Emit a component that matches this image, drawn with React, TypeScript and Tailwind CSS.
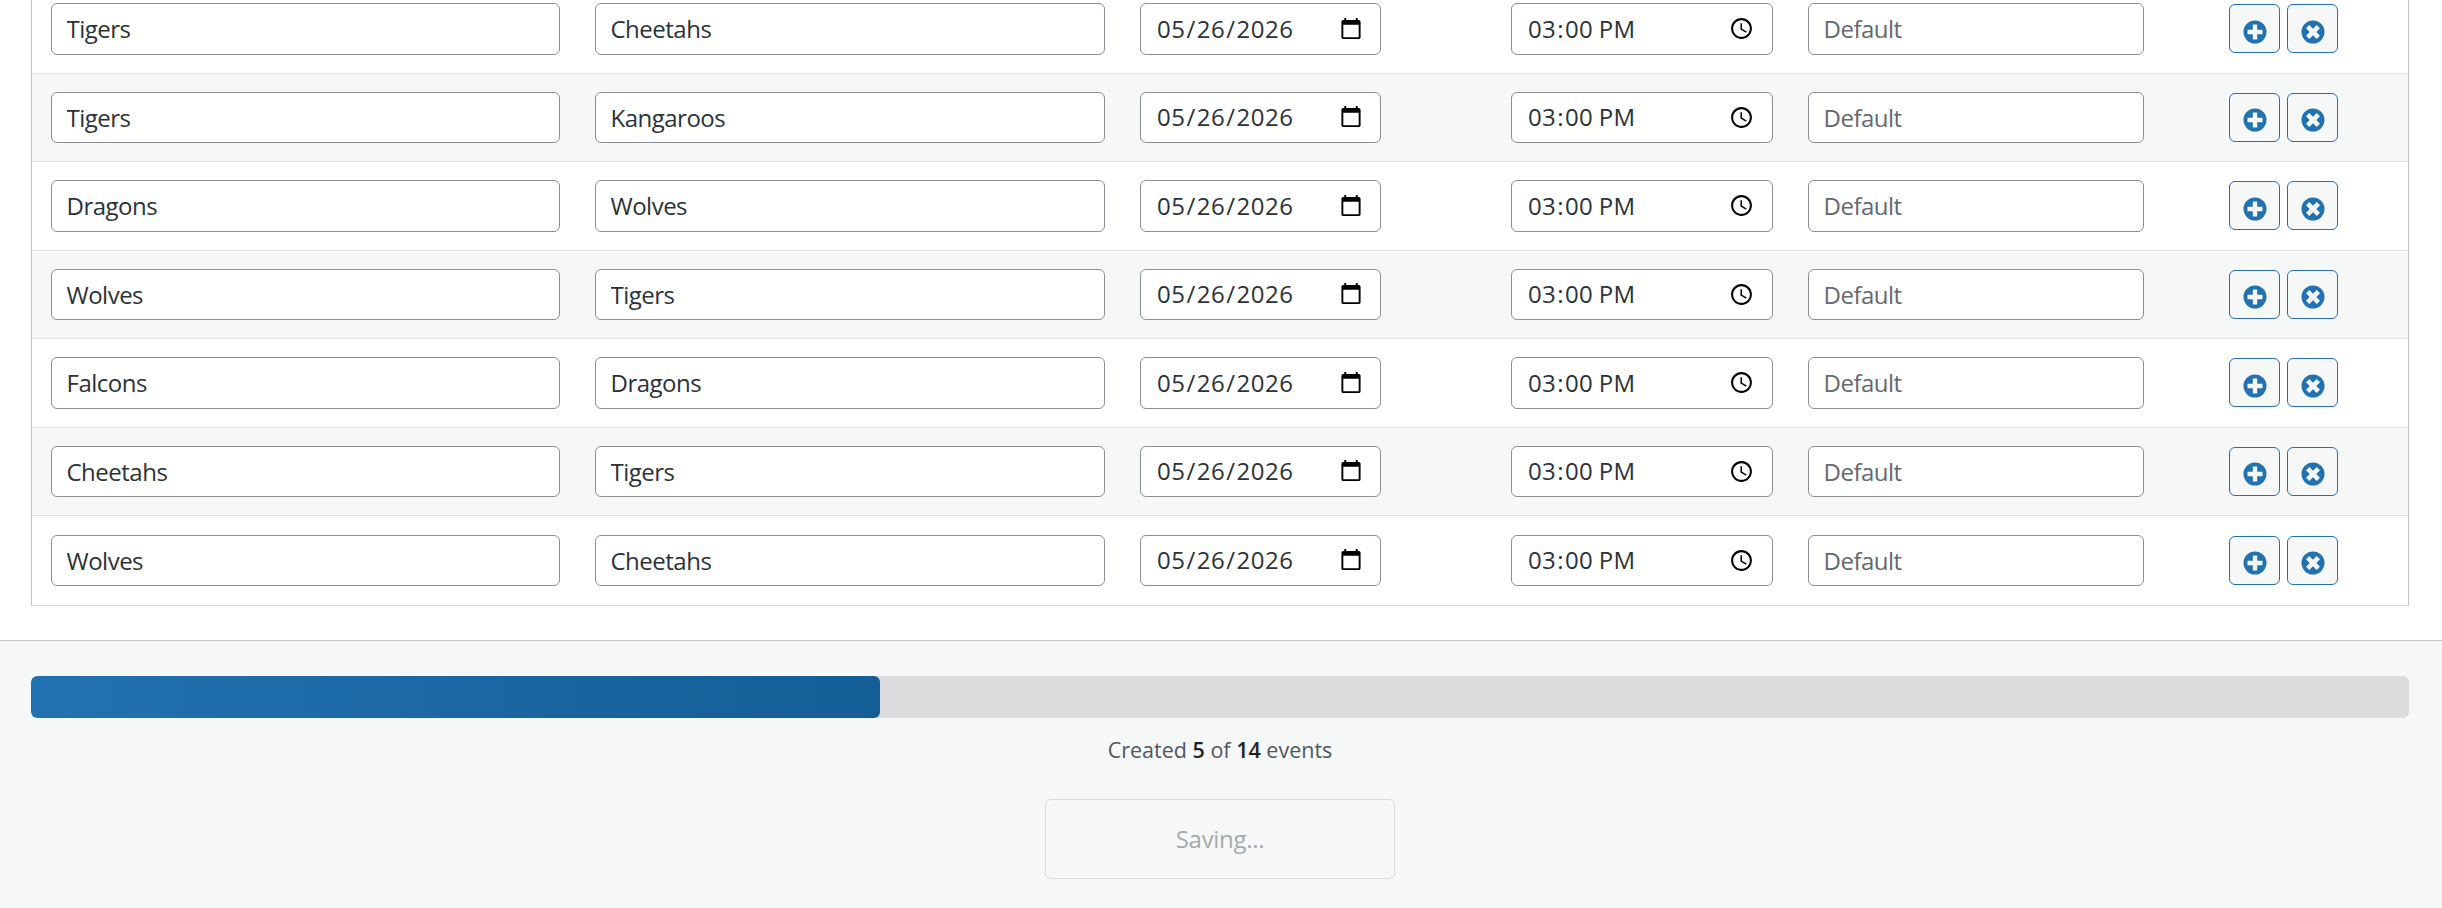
import React from 'react'

const rows = [
    ['Tigers', 'Cheetahs'],
    ['Tigers', 'Kangaroos'],
    ['Dragons', 'Wolves'],
    ['Wolves', 'Tigers'],
    ['Falcons', 'Dragons'],
    ['Cheetahs', 'Tigers'],
    ['Wolves', 'Cheetahs'],
]

const inputClass =
    'h-[51.5px] rounded-[6px] border border-[#8c8f94] bg-white px-[15px] text-[24px] text-[#2c3338] outline-none placeholder:text-[#646970]'

const PlusIcon = () => (
    <svg viewBox="0 0 24 24" className="h-[24px] w-[24px]">
        <path
            fill="#2271b1"
            fillRule="evenodd"
            d="M12 .5a11.500 11.500 0 1 0 0 23 11.500 11.500 0 0 0 0-23zM9.800 4.500h4.400v5.300h5.300v4.400h-5.300v5.300H9.800v-5.300H4.500V9.800h5.300z"
        />
    </svg>
)

const CloseIcon = () => (
    <svg viewBox="0 0 24 24" className="h-[24px] w-[24px]">
        <path
            fill="#2271b1"
            fillRule="evenodd"
            d="M12 .5a11.500 11.500 0 1 0 0 23 11.500 11.500 0 0 0 0-23zM8.300 5 12 8.700 15.700 5 19 8.300 15.300 12l3.700 3.700-3.300 3.300-3.700-3.700L8.300 19 5 15.700 8.700 12 5 8.300z"
        />
    </svg>
)

const IconButton = ({ children }: { children: React.ReactNode }) => (
    <button className="flex h-[49px] w-[51px] items-center justify-center rounded-[6px] border border-[#2271b1] bg-[#f6f7f7] pt-[6px]">
        {children}
    </button>
)

export default function App() {
    return (
        <div className="flex h-screen flex-col overflow-hidden bg-white font-['Open_Sans',sans-serif]">
            <div className="h-[640px] shrink-0 overflow-hidden pl-[31px] pr-[33px]">
                <div className="-mt-[15px] border border-t-0 border-[#c3c4c7] border-b-[#dcdcde] shadow-[0_1px_2px_rgba(0,0,0,0.06)]">
                    {rows.map((r, i) => (
                        <div
                            key={i}
                            className={`grid h-[88.5px] grid-cols-[545px_545px_372px_296px_372px_1fr] items-center border-b border-[#e2e3e4] last:border-b-0 ${
                                i % 2 === 1 ? 'bg-[#f6f7f7]' : 'bg-white'
                            }`}
                        >
                            <div className="pl-[19px] pr-[17px]">
                                <input defaultValue={r[0]} className={`${inputClass} w-full pl-[14.5px] tracking-[-0.5px]`} />
                            </div>
                            <div className="pl-[18px] pr-[17px]">
                                <input defaultValue={r[1]} className={`${inputClass} w-full pl-[14.5px] tracking-[-0.5px]`} />
                            </div>
                            <div className="pl-[18px]">
                                <input type="date" defaultValue="2026-05-26" className={`${inputClass} w-[241px] tracking-[0.5px]`} />
                            </div>
                            <div className="pl-[17px]">
                                <input type="time" defaultValue="15:00" className={`${inputClass} w-[262px] tracking-[0.4px]`} />
                            </div>
                            <div className="pl-[18px] pr-[18px]">
                                <input placeholder="Default" className={`${inputClass} w-full pl-[14.5px] tracking-[-0.5px]`} />
                            </div>
                            <div className="flex gap-[7px] pl-[67px]">
                                <IconButton>
                                    <PlusIcon />
                                </IconButton>
                                <IconButton>
                                    <CloseIcon />
                                </IconButton>
                            </div>
                        </div>
                    ))}
                </div>
            </div>

            <div className="flex-1 border-t border-[#c3c4c7] bg-[#f6f7f7] pl-[31px] pr-[33px] pt-[35px]">
                <div className="h-[42px] overflow-hidden rounded-[6px] bg-[#dcdcde]">
                    <div className="h-full w-[35.7%] rounded-[6px] bg-linear-to-r from-[#2271b1] to-[#135e96]" />
                </div>
                <p className="mt-[18px] text-center text-[21.500px] leading-[27px] text-[#50575e]">
                    Created <strong className="font-semibold text-[#1d2327]">5</strong> of{' '}
                    <strong className="font-semibold text-[#1d2327]">14</strong> events
                </p>
                <div className="mt-[36px] flex justify-center">
                    <button
                        disabled
                        className="h-[80px] w-[350px] rounded-[6px] border border-[#dcdcde] bg-[#f6f7f7] text-[24px] tracking-[-0.3px] text-[#a7aaad]"
                    >
                        Saving...
                    </button>
                </div>
            </div>
        </div>
    )
}
